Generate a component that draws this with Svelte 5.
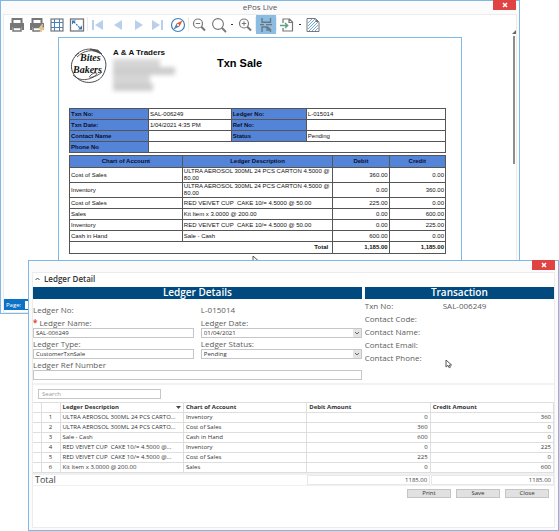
<script lang="ts">
  interface Entry {
    account: string;
    text: string;
    debit: string;
    credit: string;
  }

  const reportRows: Entry[] = [
    { account: 'Cost of Sales', text: 'ULTRA AEROSOL 300ML 24 PCS CARTON 4.5000 @ 80.00', debit: '360.00', credit: '0.00' },
    { account: 'Inventory', text: 'ULTRA AEROSOL 300ML 24 PCS CARTON 4.5000 @ 80.00', debit: '0.00', credit: '360.00' },
    { account: 'Cost of Sales', text: 'RED VEIVET CUP  CAKE 10/= 4.5000 @ 50.00', debit: '225.00', credit: '0.00' },
    { account: 'Sales', text: 'Kit Item x 3.0000 @ 200.00', debit: '0.00', credit: '600.00' },
    { account: 'Inventory', text: 'RED VEIVET CUP  CAKE 10/= 4.5000 @ 50.00', debit: '0.00', credit: '225.00' },
    { account: 'Cash in Hand', text: 'Sale - Cash', debit: '600.00', credit: '0.00' }
  ];

  const ledgerRows: Entry[] = [
    { text: 'ULTRA AEROSOL 300ML 24 PCS CARTO...', account: 'Inventory', debit: '0', credit: '360' },
    { text: 'ULTRA AEROSOL 300ML 24 PCS CARTO...', account: 'Cost of Sales', debit: '360', credit: '0' },
    { text: 'Sale - Cash', account: 'Cash in Hand', debit: '600', credit: '0' },
    { text: 'RED VEIVET CUP  CAKE 10/= 4.5000 @...', account: 'Inventory', debit: '0', credit: '225' },
    { text: 'RED VEIVET CUP  CAKE 10/= 4.5000 @...', account: 'Cost of Sales', debit: '225', credit: '0' },
    { text: 'Kit Item x 3.0000 @ 200.00', account: 'Sales', debit: '0', credit: '600' }
  ];

  const contactFields = ['Contact Code:', 'Contact Name:', 'Contact Email:', 'Contact Phone:'];

  let open = $state(true);
  let ledgerName = $state('SAL-006249');
  let ledgerType = $state('CustomerTxnSale');
  let ledgerRef = $state('');
  let search = $state('');
  let page = $state('');
</script>

{#snippet closeIcon()}
  <svg width="6" height="6" viewBox="0 0 6 6" stroke="#fff" stroke-width="1.5" aria-hidden="true">
    <path d="M1 1L5 5M5 1L1 5" />
  </svg>
{/snippet}

{#snippet pointer()}
  <svg width="8" height="10" viewBox="0 0 8 10" fill="#fff" stroke="#555" stroke-width="1" aria-hidden="true">
    <path d="M1 1V8L3 6.3L4.2 8.8L5.4 8.2L4.4 6H6.6Z" />
  </svg>
{/snippet}

{#snippet printer()}
  <path d="M3.5 6V2H12.5V6" fill="none" stroke="#777" stroke-width="2" />
  <path d="M1 6H15V13H13V10H3V13H1Z" fill="#777" />
  <path d="M4 10.5H12V14H4Z" fill="#fff" stroke="#777" stroke-width="1.5" />
{/snippet}

{#snippet lens()}
  <circle cx="7" cy="6.5" r="4.5" fill="none" stroke="#777" stroke-width="1.2" />
  <path d="M10.3 9.8L14 13.5" stroke="#777" stroke-width="2" />
{/snippet}

<main>
  <section class="window report-window">
    <header class="titlebar">
      <h1>ePos Live</h1>
      <button class="close" aria-label="Close report">{@render closeIcon()}</button>
    </header>

    <div class="frame">
      <div class="toolbar">
        <button aria-label="Print"><svg viewBox="0 0 16 16">{@render printer()}</svg></button>
        <button aria-label="Quick print">
          <svg viewBox="0 0 16 16">
            {@render printer()}
            <path d="M13.5 7L9 12.5H12L10.5 16L16 10.8H13Z" fill="#f3bd62" stroke="#fff" stroke-width="0.4" />
          </svg>
        </button>
        <button aria-label="Page setup">
          <svg viewBox="0 0 16 16" fill="none">
            <rect x="2" y="2" width="12" height="12" stroke="#777" stroke-width="1.2" />
            <path d="M5.5 2V14M10.5 2V14M2 5.5H14M2 10.5H14" stroke="#4684bd" />
          </svg>
        </button>
        <button aria-label="Scale">
          <svg viewBox="0 0 16 16" fill="none">
            <rect x="1.5" y="2" width="13" height="12" stroke="#777" stroke-width="1.3" />
            <path d="M5 5L11 11" stroke="#3579b8" stroke-width="1.2" stroke-dasharray="2 1" />
            <path d="M3 3.5H7L3 7.5ZM13 12.5H9L13 8.5Z" fill="#3579b8" />
          </svg>
        </button>
        <i class="divider"></i>
        <button aria-label="First page">
          <svg viewBox="0 0 16 16" fill="#b8d0e9"><path d="M2 3H4V13H2ZM13 3V13L5 8Z" /></svg>
        </button>
        <button aria-label="Previous page">
          <svg viewBox="0 0 16 16" fill="#b8d0e9"><path d="M12 3V13L4 8Z" /></svg>
        </button>
        <button aria-label="Next page">
          <svg viewBox="0 0 16 16" fill="#b8d0e9"><path d="M5 3V13L13 8Z" /></svg>
        </button>
        <button aria-label="Last page">
          <svg viewBox="0 0 16 16" fill="#b8d0e9"><path d="M11 3H13V13H11ZM2 3V13L10 8Z" /></svg>
        </button>
        <button aria-label="Navigation">
          <svg viewBox="0 0 16 16">
            <circle cx="8" cy="8" r="6.5" fill="#fff" stroke="#3f81bd" stroke-width="1.2" />
            <path d="M12.5 3.5L9.5 9.5L6.5 6.5Z" fill="#e2583b" />
            <path d="M3.5 12.5L6.5 6.5L9.5 9.5Z" fill="#5c82ab" />
            <circle cx="8" cy="8" r="1" fill="#fff" />
          </svg>
        </button>
        <i class="divider"></i>
        <button aria-label="Zoom out">
          <svg viewBox="0 0 16 16">{@render lens()}<path d="M4.8 6.5H9.2" stroke="#777" /></svg>
        </button>
        <button aria-label="Zoom">
          <svg viewBox="0 0 16 16">
            <circle cx="7" cy="7" r="5.4" fill="none" stroke="#777" stroke-width="1.1" />
            <path d="M11 11L15 15" stroke="#777" stroke-width="1.8" />
          </svg>
        </button>
        <button class="more" aria-label="Zoom levels"><i></i></button>
        <button aria-label="Zoom in">
          <svg viewBox="0 0 16 16">{@render lens()}<path d="M4.8 6.5H9.2M7 4.3V8.7" stroke="#777" /></svg>
        </button>
        <i class="divider"></i>
        <button class="active" aria-label="Continuous view">
          <svg viewBox="0 0 16 16" fill="none" stroke="#697783" stroke-width="1.4">
            <path d="M4 1V5.3H12.5V1M2 7.6H6M8 7.6H14" />
            <path d="M4 15V10H9.5L12.5 12.5V15M9 10V13H12.5" />
          </svg>
        </button>
        <i class="divider"></i>
        <button aria-label="Export">
          <svg viewBox="0 0 16 16" fill="none">
            <path d="M4 6V2H10.5L13.5 5V14H4V11M10 2V5.5H13.5" stroke="#777" stroke-width="1.2" />
            <path d="M1 8.5H8M6 6L8.7 8.5L6 11" stroke="#57a47e" stroke-width="1.4" />
          </svg>
        </button>
        <button class="more" aria-label="Export formats"><i></i></button>
        <button aria-label="Watermark">
          <svg viewBox="0 0 16 16" fill="none">
            <path d="M2 1.5H10.5L14 5V14.5H2Z" stroke="#777" />
            <path d="M3 6L7 2M3 9L10 2M3 12L11 4M4 14L13 5M7 14L13 8M10 14L13 11" stroke="#75a9dc" />
            <path d="M10.5 1.5V5H14Z" fill="#777" />
          </svg>
        </button>
      </div>

      <div class="viewer">
        <article class="paper">
          <div class="letterhead">
            <svg class="logo" viewBox="0 0 38 38" role="img" aria-label="Bites Bakers">
              <g fill="none" stroke="#333">
                <path d="M10 6C1 12 0 23 7 30C14 38 29 37 34 28C38 21 38 13 33 8" stroke-width="0.9" />
                <path d="M6 9C14 0 26 0 33 8M8 10C15 3 24 2 31 6" stroke-width="0.8" />
                <path d="M4 28C12 36 23 32 27 28C30 25 24 25 21 29C18 32 28 30 33 25" stroke-width="0.8" />
                <path d="M21 2L29 3L33 7L25 4Z" fill="#555" stroke-width="0.5" />
              </g>
              <text x="11" y="14">Bites</text>
              <text x="4" y="26">Bakers</text>
            </svg>
            <div class="company">
              <strong>A &amp; A Traders</strong>
              <div class="redacted" aria-hidden="true"><i></i><i></i><i></i><i></i></div>
            </div>
            <h2>Txn Sale</h2>
          </div>

          <table class="facts">
            <colgroup><col class="w-key" /><col class="w-val" /><col class="w-key2" /><col /></colgroup>
            <tbody>
              <tr><th scope="row">Txn No:</th><td>SAL-006249</td><th scope="row">Ledger No:</th><td>L-015014</td></tr>
              <tr><th scope="row">Txn Date:</th><td>1/04/2021 4:35 PM</td><th scope="row">Ref No:</th><td></td></tr>
              <tr><th scope="row">Contact Name</th><td></td><th scope="row">Status</th><td>Pending</td></tr>
              <tr><th scope="row">Phone No</th><td colspan="3"></td></tr>
            </tbody>
          </table>

          <table class="lines">
            <colgroup><col class="w-account" /><col class="w-text" /><col class="w-amount" /><col /></colgroup>
            <thead>
              <tr><th>Chart of Account</th><th>Ledger Description</th><th>Debit</th><th>Credit</th></tr>
            </thead>
            <tbody>
              {#each reportRows as row}
                <tr>
                  <td>{row.account}</td>
                  <td class="desc">{row.text}</td>
                  <td class="num">{row.debit}</td>
                  <td class="num">{row.credit}</td>
                </tr>
              {/each}
            </tbody>
            <tfoot>
              <tr><td colspan="2" class="sum">Total</td><td class="num">1,185.00</td><td class="num">1,185.00</td></tr>
            </tfoot>
          </table>
          <span class="pointer report-pointer">{@render pointer()}</span>
        </article>
        <div class="scroll" aria-hidden="true">
          <svg width="4" height="4" viewBox="0 0 4 4"><path d="M4 0V4H0Z" fill="#666" /></svg>
          <i></i>
        </div>
      </div>

      <footer class="statusbar">
        <label for="page">Page:</label>
        <input id="page" bind:value={page} />
      </footer>
    </div>
  </section>

  <section class="window dialog">
    <header class="titlebar">
      <button class="close" aria-label="Close ledger">{@render closeIcon()}</button>
    </header>

    <div class="frame">
      <button class="expander" aria-expanded={open} onclick={() => open = !open}>
        <svg width="5" height="4" viewBox="0 0 5 4" fill="none" stroke="#444" aria-hidden="true">
          <path d="M0.5 3L2.5 1L4.5 3" />
        </svg>
        Ledger Detail
      </button>

      {#if open}
        <div class="details">
          <section>
            <h3>Ledger Details</h3>
            <div class="form">
              <span class="fixed">Ledger No:</span>
              <span class="fixed">L-015014</span>
              <div>
                <label for="name"><b>*</b> Ledger Name:</label>
                <input id="name" bind:value={ledgerName} />
              </div>
              <div>
                <label for="date">Ledger Date:</label>
                <div class="combo">
                  <select id="date"><option>01/04/2021</option></select>
                  <svg viewBox="0 0 8 8" fill="none" stroke="#666" aria-hidden="true"><path d="M2 3L4 5L6 3" /></svg>
                </div>
              </div>
              <div>
                <label for="type">Ledger Type:</label>
                <input id="type" bind:value={ledgerType} />
              </div>
              <div>
                <label for="status">Ledger Status:</label>
                <div class="combo">
                  <select id="status"><option>Pending</option></select>
                  <svg viewBox="0 0 8 8" fill="none" stroke="#666" aria-hidden="true"><path d="M2 3L4 5L6 3" /></svg>
                </div>
              </div>
              <div class="wide">
                <label for="ref">Ledger Ref Number</label>
                <input id="ref" bind:value={ledgerRef} />
              </div>
            </div>
          </section>

          <section class="transaction">
            <h3>Transaction</h3>
            <dl>
              <dt>Txn No:</dt><dd>SAL-006249</dd>
              {#each contactFields as field}
                <dt>{field}</dt><dd></dd>
              {/each}
            </dl>
            <span class="pointer form-pointer">{@render pointer()}</span>
          </section>
        </div>
      {/if}

      <div class="search">
        <input aria-label="Search" placeholder="Search" bind:value={search} />
      </div>

      <table class="ledger">
        <colgroup><col class="w-mark" /><col class="w-no" /><col /><col /><col /><col /></colgroup>
        <thead>
          <tr>
            <th></th><th></th>
            <th>
              <div class="sorted">
                Ledger Description
                <svg width="5" height="3" viewBox="0 0 5 3" aria-hidden="true"><path d="M0 0H5L2.5 3Z" fill="#444" /></svg>
              </div>
            </th>
            <th>Chart of Account</th><th>Debit Amount</th><th>Credit Amount</th>
          </tr>
        </thead>
        <tbody>
          {#each ledgerRows as row, i}
            <tr>
              <td></td>
              <td class="index">{i + 1}</td>
              <td>{row.text}</td>
              <td>{row.account}</td>
              <td class="num">{row.debit}</td>
              <td class="num">{row.credit}</td>
            </tr>
          {/each}
        </tbody>
      </table>

      <div class="totals">
        <span>Total</span>
        <output>1185.00</output>
        <output>1185.00</output>
      </div>

      <div class="actions">
        <button>Print</button>
        <button>Save</button>
        <button>Close</button>
      </div>
    </div>
  </section>
</main>

<style>
  :global(body) { background: #fff; }

  main {
    --edge: #7fb7e5;
    --navy: #004a80;
    --rule: #dedede;
    font-family: "Open Sans", "Noto Sans", sans-serif;
    font-size: 6px;
    line-height: 10px;
    color: #333;
    overflow: hidden;
  }

  main :global(*) { box-sizing: border-box; }

  svg { display: block; flex: none; }
  h1, h2, h3, dl, dd { margin: 0; }
  i { display: block; }

  button, input, select {
    font: inherit;
    color: inherit;
    margin: 0;
    padding: 0;
    border-radius: 0;
  }

  /* Windows */
  .window {
    border: 1px solid var(--edge);
    background: #fbfbfb;
  }

  .report-window { margin-right: 39px; }

  .dialog {
    position: relative;
    margin: -54px 0 0 28px;
    padding-bottom: 2px;
  }

  .titlebar {
    position: relative;
    height: 13px;
  }
  .dialog .titlebar { height: 11px; }

  .titlebar h1 {
    font-size: 8px;
    font-weight: 400;
    line-height: 11px;
    text-align: center;
    color: #555;
  }

  .close {
    position: absolute;
    top: -1px;
    right: 3px;
    width: 23px;
    height: 10px;
    border: 0;
    background: #e04343;
    display: grid;
    place-items: center;
  }

  .frame {
    margin: 0 2px;
    border: 1px solid #ececec;
    background: #fff;
  }
  .dialog .frame { margin: 0 3px; }

  .pointer { position: absolute; }

  /* Toolbar */
  .toolbar {
    display: flex;
    align-items: flex-start;
    height: 22px;
    padding-left: 3px;
  }

  .toolbar button {
    width: 20px;
    height: 19px;
    border: 0;
    background: none;
    display: grid;
    place-items: center;
  }
  .toolbar button svg { width: 16px; height: 16px; }
  .toolbar .active { background: #8bbde3; }
  .toolbar .more { width: 6px; }
  .toolbar .more i { width: 2px; height: 1px; background: #333; }

  .divider {
    width: 1px;
    height: 14px;
    margin-top: 2px;
    background: #ececec;
  }

  /* Report page */
  .viewer {
    display: flex;
    justify-content: space-between;
    padding-left: 54px;
  }

  .paper {
    position: relative;
    flex: 0 1 404px;
    min-height: 262px;
    padding: 7px 15px 0 10px;
    border: 1px solid var(--edge);
    border-bottom: 0;
    font-family: "Liberation Sans", Arial, sans-serif;
    line-height: 7px;
    color: #111;
  }

  .letterhead {
    display: flex;
    height: 63px;
  }

  .logo { width: 38px; height: 38px; margin-top: 2px; }
  .logo text {
    font: italic bold 10px "Liberation Serif", serif;
    fill: #111;
  }

  .company {
    width: 110px;
    padding: 3px 0 0 6px;
  }
  .company strong {
    font-size: 8px;
    line-height: 10px;
  }

  .redacted {
    width: 62px;
    padding-top: 1px;
    filter: blur(2px);
  }
  .redacted i {
    width: 75%;
    height: 8px;
    background: #d6d6d6;
  }
  .redacted i:nth-child(2) { width: 100%; background: #cecece; }
  .redacted i:nth-child(3) { width: 60%; }
  .redacted i:nth-child(4) { width: 65%; background: #cecece; }

  .letterhead h2 {
    padding-top: 11px;
    font-size: 11px;
    line-height: 14px;
    color: #000;
  }

  .report-pointer { left: 193px; top: 217px; }

  table {
    width: 100%;
    border-collapse: collapse;
    table-layout: fixed;
  }

  .facts th, .facts td, .lines th, .lines td {
    border: 1px solid #555;
    padding: 0 1px;
    height: 11px;
  }
  .facts th, .lines th {
    background: #5484d8;
    color: #0a0f2a;
  }
  .facts th { text-align: left; }
  .lines { margin-top: 2px; }
  .lines .desc { white-space: pre-wrap; }
  .lines thead th { height: 12px; }
  .lines tfoot td { height: 12px; font-weight: 700; }
  .lines .sum { text-align: right; padding-right: 4px; }
  .num { text-align: right; }

  .w-key { width: 21%; }
  .w-val { width: 22%; }
  .w-key2 { width: 20%; }
  .w-account { width: 30%; }
  .w-text { width: 40%; }
  .w-amount { width: 15%; }

  .scroll {
    width: 4px;
    margin-top: -7px;
  }
  .scroll i {
    width: 2px;
    height: 128px;
    margin: 2px 0 0 1px;
    background: #8d8d8d;
  }

  .statusbar {
    display: flex;
    align-items: center;
    gap: 4px;
    height: 11px;
    margin-bottom: 2px;
    padding-left: 2px;
    background: #0b72c6;
    color: #fff;
  }
  .statusbar input {
    width: 24px;
    height: 8px;
    border: 0;
    background: #fff;
    color: #333;
  }

  /* Ledger form */
  .expander {
    display: flex;
    align-items: center;
    gap: 4px;
    width: 100%;
    height: 14px;
    padding: 0 0 2px 2px;
    border: 0;
    background: none;
    font-size: 8px;
    font-weight: 600;
    line-height: 12px;
  }

  .details {
    display: grid;
    grid-template-columns: 330fr 190fr;
    gap: 3px;
    font-size: 8px;
    color: #5c5c5c;
    padding-bottom: 3px;
    border-bottom: 2px solid #f2f2f2;
  }

  h3 {
    height: 12px;
    background: var(--navy);
    color: #fff;
    font-size: 10px;
    font-weight: 600;
    line-height: 11px;
    text-align: center;
  }

  .form {
    display: grid;
    grid-template-columns: 1fr 1fr;
    column-gap: 7px;
    padding-top: 5px;
    line-height: 11px;
  }
  .form label { display: block; }
  .form label b { color: #e8483c; }
  .form .fixed { margin-bottom: 2px; }
  .form .wide { grid-column: 1 / -1; }

  .form input, .form select {
    display: block;
    width: 100%;
    height: 10px;
    padding: 0 2px;
    border: 1px solid #c6c6c6;
    background: #fff;
    color: #333;
    font-size: 6px;
    line-height: 8px;
    appearance: none;
  }

  .combo { position: relative; }
  .combo svg {
    position: absolute;
    top: 1px;
    right: 1px;
    width: 8px;
    height: 8px;
    background: #e4e4e4;
    pointer-events: none;
  }

  .transaction { position: relative; }
  .transaction dl {
    display: grid;
    grid-template-columns: 78px 1fr;
    line-height: 13px;
  }
  .form-pointer { left: 80px; top: 72px; }

  .search { padding: 4px 5px 3px; }
  .search input {
    display: block;
    width: 123px;
    height: 10px;
    padding: 0 3px;
    border: 1px solid #c6c6c6;
    line-height: 8px;
  }
  .search input::placeholder { color: #999; opacity: 1; }

  /* Ledger grid */
  .ledger { line-height: 9px; }
  .ledger th, .ledger td {
    height: 10px;
    padding: 0 2px;
    border: 1px solid var(--rule);
    border-left: 0;
    text-align: left;
    white-space: pre;
    overflow: hidden;
  }
  .ledger .num { text-align: right; }
  .ledger .index { text-align: center; }
  .sorted {
    display: flex;
    align-items: center;
    justify-content: space-between;
  }
  .w-mark { width: 8px; }
  .w-no { width: 19px; }

  .totals {
    display: grid;
    grid-template-columns: 274fr 123fr 123fr;
    gap: 1px;
    border: solid #f0f0f0;
    border-width: 2px 0 1px;
    color: #444;
  }
  .totals span { padding-left: 2px; font-size: 9px; }
  .totals output {
    padding-right: 2px;
    border: 1px solid #e8e8e8;
    line-height: 8px;
    text-align: right;
  }

  .actions {
    display: flex;
    justify-content: flex-end;
    gap: 5px;
    padding: 3px 5px 29px;
  }
  .actions button {
    width: 44px;
    height: 9px;
    border: 1px solid #c4c4c4;
    background: #e1e1e1;
    line-height: 7px;
  }
</style>
